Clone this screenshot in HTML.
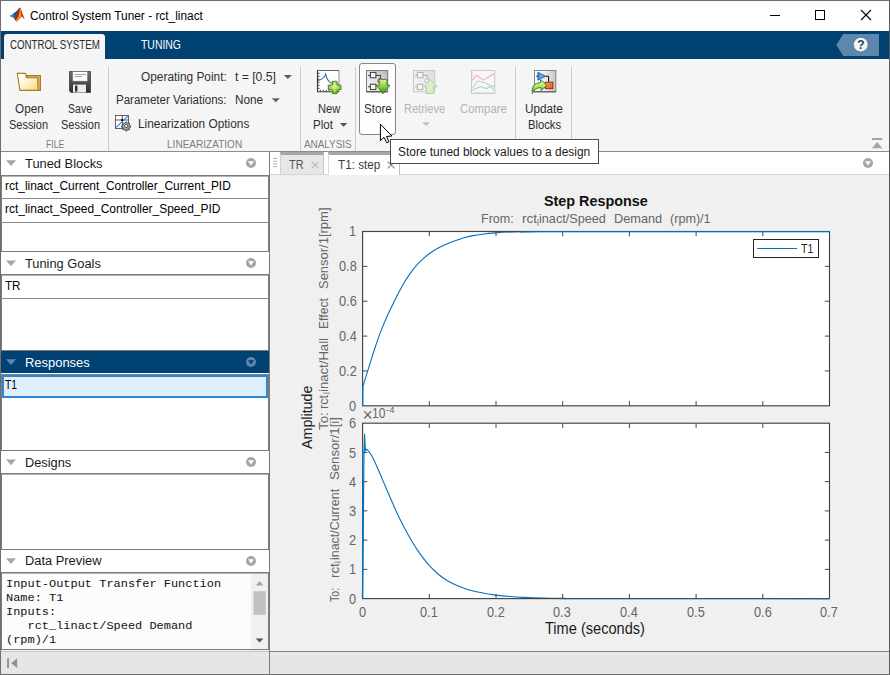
<!DOCTYPE html>
<html lang="en"><head><meta charset="utf-8"><title>Control System Tuner - rct_linact</title>
<style>
html,body{margin:0;padding:0;background:#f0f0f0;}
body{width:890px;height:675px;overflow:hidden;position:relative;font-family:"Liberation Sans",sans-serif;}
#win{position:absolute;left:0;top:0;width:890px;height:675px;overflow:hidden;background:#f0f0f0;}
#win div,#win svg,#win span.t{position:absolute;}
span.t{white-space:pre;line-height:1;transform-origin:0 0;font-family:"Liberation Sans",sans-serif;}
.z9{z-index:9;}
#titlebar{left:1px;top:1px;width:888px;height:30px;background:#fff;}
#tabbar{left:1px;top:31px;width:888px;height:28px;background:#004173;}
#acttab{left:3px;top:3px;width:101px;height:25px;background:#f5f5f5;border-radius:3px 3px 0 0;}
#toolstrip{left:1px;top:59px;width:888px;height:92px;background:#f5f5f5;}
.vsep{width:1px;background:#cacaca;top:8px;height:84px;}
#tsborder{left:0;top:151px;width:890px;height:1px;background:#8c8c8c;}
#storebtn{left:358px;top:4px;width:35px;height:70px;border:1px solid #868686;border-radius:3px;background:#fefefe;box-sizing:content-box;}
#tooltip{left:390px;top:139px;width:207px;height:23px;border:1px solid #4c4c4c;background:#fff;z-index:8;}
/* left panel */
#left{left:1px;top:152px;width:268px;height:498px;background:#fff;}
.hdr{left:0;width:268px;height:22px;background:#fff;}
.hdr.sel{background:#004173;}
.list{left:0;width:268px;border:1px solid #7c7c7c;background:#fff;box-sizing:border-box;box-shadow:inset 0 1px 0 #b4b4b4;}
.rowsep{left:0;width:268px;height:1px;background:#8a8a8a;}
#lborder{left:269px;top:152px;width:1px;height:522px;background:#7a7a7a;z-index:3;}
#wl{left:0;top:0;width:1px;height:675px;background:#6e6e6e;}
#wr{left:889px;top:0;width:1px;height:675px;background:#5a5a5a;}
#wt{left:0;top:0;width:890px;height:1px;background:#6e6e6e;}
#wb{left:0;top:674px;width:890px;height:1px;background:#707070;}
#status{left:1px;top:651px;width:888px;height:23px;background:#e6e6e6;border-top:1px solid #c6c6c6;box-sizing:border-box;}
#status2{left:270px;top:651px;width:619px;height:1px;background:#828282;}
/* right */
#doctabs{left:270px;top:152px;width:619px;height:22px;background:#fff;border-bottom:1px solid #d4d4d4;}
#tabTR{left:10px;top:0;width:44px;height:22px;background:#e7e7e7;border-top:3px solid #a6a6a6;border-left:1px solid #d2d2d2;border-right:1px solid #c2c2c2;box-sizing:border-box;}
#tabT1{left:58px;top:0;width:72px;height:23px;background:#fff;border-top:3px solid #a6a6a6;border-left:1px solid #dadada;border-right:1px solid #c0c0c0;box-sizing:border-box;}
#plot{left:270px;top:175px;width:619px;height:476px;background:#f0f0f0;}

</style></head>
<body>
<div id="win">
<div id="titlebar"></div>
<div id="tabbar"><div id="acttab"></div></div>
<div id="toolstrip">
 <div class="vsep" style="left:107px"></div>
 <div class="vsep" style="left:299px"></div>
 <div class="vsep" style="left:354px"></div>
 <div class="vsep" style="left:514px"></div>
 <div class="vsep" style="left:570px"></div>
 <div id="storebtn"></div>
</div>
<div id="tsborder"></div>
<div id="left">
 <div class="hdr" style="top:0"></div>
 <div class="list" style="top:23px;height:77px"></div>
 <div class="rowsep" style="top:46px"></div>
 <div class="rowsep" style="top:70px"></div>
 <div class="hdr" style="top:100px"></div>
 <div class="list" style="top:122px;height:77px"></div>
 <div class="rowsep" style="top:146px"></div>
 <div class="hdr sel" style="top:199px"></div>
 <div class="list" style="top:222px;height:77px"></div>
 <div id="selrow" style="left:1px;top:223px;width:266px;height:23px;box-sizing:border-box;border:2px solid #2f86d6;background:#ddeffc"></div>
 <div class="hdr" style="top:299px"></div>
 <div class="list" style="top:321px;height:77px"></div>
 <div class="hdr" style="top:398px"></div>
 <div class="list" style="top:420px;height:78px;background:#fcfcfc"></div>
</div>
<div id="lborder"></div>
<div id="doctabs"><div id="tabTR"></div><div id="tabT1"></div></div>
<div id="plot"></div>
<div id="status"></div><div id="status2"></div>
<div id="tooltip"></div>
<svg id="plotsvg" width="890" height="675" viewBox="0 0 890 675" style="left:0;top:0">
<rect x="362.6" y="231.5" width="466.9" height="174.3" fill="#fff" stroke="none"/>
<rect x="362.6" y="423.2" width="466.9" height="175.40000000000003" fill="#fff" stroke="none"/>
<path fill="none" stroke="#0072bd" stroke-width="1.1" stroke-linejoin="round" d="M362.6,405.8L362.80,386.89C363.48,384.67 365.47,378.15 366.89,373.56C368.31,368.96 369.85,364.01 371.33,359.33C372.81,354.65 374.30,349.88 375.78,345.47C377.26,341.05 378.46,337.42 380.22,332.84C381.98,328.27 384.43,322.36 386.33,318.00C388.24,313.64 389.67,310.78 391.67,306.67C393.67,302.56 396.11,297.56 398.33,293.33C400.56,289.11 402.78,285.00 405.00,281.33C407.22,277.67 409.44,274.33 411.67,271.33C413.89,268.33 416.11,265.71 418.33,263.33C420.56,260.96 422.78,258.96 425.00,257.07C427.22,255.18 429.44,253.51 431.67,252.00C433.89,250.49 436.11,249.22 438.33,248.00C440.56,246.78 442.78,245.67 445.00,244.67C447.22,243.67 449.44,242.82 451.67,242.00C453.89,241.18 456.28,240.44 458.33,239.73C460.39,239.03 461.55,238.46 463.99,237.78C466.43,237.09 469.98,236.22 472.98,235.62C475.97,235.02 478.22,234.64 481.97,234.18C485.71,233.72 490.36,233.20 495.45,232.83C500.54,232.46 505.49,232.18 512.53,231.97C519.57,231.76 529.78,231.64 537.70,231.57C545.61,231.50 549.62,231.56 560.00,231.55C570.38,231.54 555.08,231.51 600.00,231.50C644.92,231.49 791.25,231.50 829.50,231.50"/>
<path fill="none" stroke="#0072bd" stroke-width="1.1" stroke-linejoin="round" d="M362.32,598.46 L362.88,572.57 L363.44,507.85 L364.00,457.21 L364.57,434.13 L364.99,443.14 L365.41,451.02 L366.11,449.33 L366.82,449.33C367.19,449.75 368.22,450.73 369.07,451.86C369.91,452.99 370.48,453.41 371.88,456.08C373.29,458.75 375.63,463.72 377.51,467.90C379.39,472.07 381.03,476.20 383.14,481.12C385.25,486.05 387.83,492.05 390.17,497.44C392.52,502.84 394.86,508.46 397.21,513.48C399.55,518.50 401.90,523.09 404.24,527.55C406.59,532.00 408.70,535.90 411.27,540.21C413.85,544.53 416.81,549.31 419.72,553.44C422.62,557.56 425.67,561.55 428.72,564.97C431.77,568.40 434.82,571.30 438.01,573.98C441.19,576.65 444.57,579.04 447.85,581.01C451.14,582.98 454.42,584.39 457.70,585.79C460.98,587.20 463.56,588.28 467.55,589.45C471.54,590.62 476.93,591.89 481.62,592.83C486.31,593.77 491.00,594.47 495.69,595.08C500.38,595.69 505.07,596.11 509.76,596.49C514.44,596.86 518.20,597.07 523.82,597.33C529.45,597.59 536.95,597.87 543.52,598.03C550.09,598.20 554.63,598.24 563.22,598.31C571.80,598.38 550.63,598.41 595.01,598.46C639.39,598.50 790.42,598.58 829.50,598.60"/>
<rect x="362.6" y="231.5" width="466.9" height="174.3" fill="none" stroke="#444444" stroke-width="1.15"/>
<path d="M429.30,405.8v-4.7M429.30,231.5v4.7M496.00,405.8v-4.7M496.00,231.5v4.7M562.70,405.8v-4.7M562.70,231.5v4.7M629.40,405.8v-4.7M629.40,231.5v4.7M696.10,405.8v-4.7M696.10,231.5v4.7M762.80,405.8v-4.7M762.80,231.5v4.7M362.6,266.36h4.7M829.5,266.36h-4.7M362.6,301.22h4.7M829.5,301.22h-4.7M362.6,336.08h4.7M829.5,336.08h-4.7M362.6,370.94h4.7M829.5,370.94h-4.7" stroke="#444444" stroke-width="1" fill="none"/>
<rect x="362.6" y="423.2" width="466.9" height="175.40000000000003" fill="none" stroke="#444444" stroke-width="1.15"/>
<path d="M429.30,598.6v-4.7M429.30,423.2v4.7M496.00,598.6v-4.7M496.00,423.2v4.7M562.70,598.6v-4.7M562.70,423.2v4.7M629.40,598.6v-4.7M629.40,423.2v4.7M696.10,598.6v-4.7M696.10,423.2v4.7M762.80,598.6v-4.7M762.80,423.2v4.7M362.6,452.43h4.7M829.5,452.43h-4.7M362.6,481.67h4.7M829.5,481.67h-4.7M362.6,510.90h4.7M829.5,510.90h-4.7M362.6,540.13h4.7M829.5,540.13h-4.7M362.6,569.37h4.7M829.5,569.37h-4.7" stroke="#444444" stroke-width="1" fill="none"/>
<path d="M362.6,405.8V387.5" stroke="#0072bd" stroke-width="1.2"/>
<path d="M520,232.0L545,231.6H829.5" stroke="#0072bd" stroke-width="1.1" fill="none"/>
<path d="M362.6,598.6V448.6" stroke="#0072bd" stroke-width="1.2"/>
<path d="M560,598.8000000000001H829.5" stroke="#0072bd" stroke-width="1.0" fill="none" opacity=".55"/>
<rect x="753.5" y="239.5" width="65" height="18" fill="#fff" stroke="#262626" stroke-width="1"/>
<path d="M757.1,248.5H797.1" stroke="#0072bd" stroke-width="1.1"/>
</svg>
<svg id="uisvg" width="890" height="675" viewBox="0 0 890 675" style="left:0;top:0">
<defs>
 <linearGradient id="gFold" x1="0" y1="0" x2="1" y2="1"><stop offset="0" stop-color="#ffffff"/><stop offset=".4" stop-color="#fef8de"/><stop offset="1" stop-color="#f3d774"/></linearGradient>
 <linearGradient id="gFlop" x1="0" y1="0" x2="0" y2="1"><stop offset="0" stop-color="#707070"/><stop offset="1" stop-color="#2e2e2e"/></linearGradient>
 <linearGradient id="gBox" x1="0" y1="1" x2="1" y2="0"><stop offset="0" stop-color="#f4f4f4"/><stop offset=".5" stop-color="#e4e4e4"/><stop offset="1" stop-color="#b4b4b4"/></linearGradient>
 <linearGradient id="gBoxU" x1="0" y1="0" x2="1" y2="0"><stop offset="0" stop-color="#ffffff"/><stop offset=".5" stop-color="#eeeeee"/><stop offset="1" stop-color="#c4c4c4"/></linearGradient>
 <linearGradient id="gGreen" x1="0" y1="0" x2="0" y2="1"><stop offset="0" stop-color="#d9f2a6"/><stop offset=".45" stop-color="#9ed14b"/><stop offset="1" stop-color="#2f8a12"/></linearGradient>
 <radialGradient id="gPlus" cx=".5" cy=".4" r=".6"><stop offset="0" stop-color="#e4f7b8"/><stop offset=".6" stop-color="#a5d64e"/><stop offset="1" stop-color="#62a81c"/></radialGradient>
 <linearGradient id="gArr" x1="0" y1="0" x2="0" y2="1"><stop offset="0" stop-color="#e6f8c0"/><stop offset=".5" stop-color="#b4e066"/><stop offset="1" stop-color="#4d9c18"/></linearGradient>
 <linearGradient id="gTri" x1="0" y1="0" x2="1" y2="0"><stop offset="0" stop-color="#2277c8"/><stop offset=".4" stop-color="#6db6ee"/><stop offset="1" stop-color="#1c6fc0"/></linearGradient>
 <linearGradient id="gOr" x1="0" y1="0" x2="1" y2="1"><stop offset="0" stop-color="#f6a05a"/><stop offset="1" stop-color="#dd5a1c"/></linearGradient>
 <radialGradient id="gHelp" cx=".4" cy=".35" r=".75"><stop offset="0" stop-color="#ffffff"/><stop offset=".7" stop-color="#eef2f6"/><stop offset="1" stop-color="#b9c7d6"/></radialGradient>
 <radialGradient id="gGear" cx=".4" cy=".35" r=".8"><stop offset="0" stop-color="#cfcfcf"/><stop offset="1" stop-color="#7a7a7a"/></radialGradient>
</defs>
<!-- matlab logo -->
<g>
 <path d="M9.3,15.9 C11.5,15 13,14 14.4,12.9 C16,11.8 17.6,10.6 19,8.3 L17.2,13.5 L14.4,18.4 L12.2,17.3 Z" fill="#2a86d6"/>
 <path d="M13.4,13.6 C15.2,12.5 17.3,10.8 19,8.3 L17.4,13 L15.2,16.8 L14.2,17.6 Z" fill="#0c4a90" opacity=".8"/>
 <path d="M14.1,18.3 L16.3,14.5 L18,10.6 L19.3,7.8 L20.4,7.8 L21.7,11 L23,15 L24.8,19.5 L23.4,18.3 L21.8,16.6 L20.3,18 L18.3,20.3 L16.4,21.9 Z" fill="#c2351a"/>
 <path d="M19.7,8.4 L20.5,9 L21,13 L20.8,16.8 L18.4,20.1 L16.4,21.9 L15.6,20.8 L18.2,17.2 L19.4,13 Z" fill="#f0a236"/>
 <path d="M16.3,14.5 L18,10.6 L19.3,7.8 L19.6,12 L17.8,17 L15.6,20.6 L14.1,18.3 Z" fill="#8e1d12" opacity=".5"/>
</g>
<!-- window controls -->
<path d="M770,15.5H780" stroke="#000" stroke-width="1"/>
<rect x="815.5" y="10.5" width="9" height="9" fill="none" stroke="#000" stroke-width="1"/>
<path d="M861,10L871,20M871,10L861,20" stroke="#000" stroke-width="1.1" fill="none"/>
<!-- help -->
<path d="M836.2,45L843.3,34H879V56H843.3Z" fill="#5f87ae"/>
<circle cx="860.8" cy="44.7" r="7.3" fill="url(#gHelp)" stroke="#4a6f95" stroke-width=".6"/>
<text x="860.9" y="49.3" text-anchor="middle" font-family="Liberation Sans, sans-serif" font-weight="bold" font-size="12.5" fill="#1d3f66">?</text>
<!-- folder -->
<path d="M26.3,75.6H40.4V90.4H37.5Z" fill="#e2b95a" stroke="#a97622" stroke-width="1.1"/>
<path d="M17.3,73.4H25.6L26.5,77.7H37.5L38.3,90.4H19.9Z" fill="url(#gFold)" stroke="#ad7a26" stroke-width="1.1" stroke-linejoin="round"/>
<!-- floppy -->
<path d="M69.5,71.5H90.5V92.5H71L69.5,91Z" fill="url(#gFlop)" stroke="#3c3c3c" stroke-width=".8"/>
<rect x="72.6" y="71.6" width="15" height="9.6" fill="#fdfdfd" stroke="#6a6a6a" stroke-width=".6"/>
<path d="M74.5,74.5H86M74.5,76.6H82" stroke="#9a9a9a" stroke-width=".9"/>
<rect x="73" y="84.6" width="13" height="7.9" fill="#ededed"/>
<rect x="75" y="85.6" width="2.4" height="6" fill="#303030"/>
<!-- linearization icon -->
<rect x="115.5" y="115.5" width="13" height="13" fill="#fff" stroke="#484848" stroke-width=".85"/>
<path d="M122.3,115.5V128.5M115.5,120H128.5" stroke="#4a4a4a" stroke-width=".9"/>
<path d="M115.8,127.6L128.2,115.9" stroke="#2a7fd0" stroke-width="1.05"/>
<circle cx="122" cy="120" r="1.1" fill="#000"/>
<g transform="translate(126.2,126) scale(.87)">
 <path d="M-0.8,-4.5h1.6l.3,1.1 .9,.4 1,-.6 1.15,1.15 -.6,1 .4,.9 1.1,.3v1.6l-1.1,.3 -.4,.9 .6,1 -1.15,1.15 -1,-.6 -.9,.4 -.3,1.1h-1.6l-.3,-1.1 -.9,-.4 -1,.6 -1.15,-1.15 .6,-1 -.4,-.9 -1.1,-.3v-1.6l1.1,-.3 .4,-.9 -.6,-1 1.15,-1.15 1,.6 .9,-.4z" fill="url(#gGear)" stroke="#2e2e2e" stroke-width=".9"/>
 <circle r="1.9" fill="#f8f8f8" stroke="#2e2e2e" stroke-width=".9"/>
</g>
<!-- dropdown arrows -->
<path d="M283.7,75H292L287.85,79Z" fill="#606060"/>
<path d="M271.7,98.2H279.9L275.8,102.2Z" fill="#606060"/>
<path d="M339.8,122.9H347.4L343.6,126.8Z" fill="#555"/>
<path d="M422.2,122.3H430L426.1,126.1Z" fill="#c0c0c0"/>
<!-- new plot icon -->
<rect x="317.5" y="70.5" width="21.5" height="21.3" fill="#fff"/>
<path d="M339,70.5V91.8" stroke="#8c8c8c" stroke-width="1" fill="none"/>
<path d="M317.5,70.5H339" stroke="#666" stroke-width="1" fill="none"/>
<path d="M317.5,70.2V91.8H339" stroke="#333" stroke-width="1.1" fill="none"/>
<path d="M318,73.3h1.6M318,76.3h1.6M318,79.3h1.6M318,82.3h1.6M318,85.3h1.6M318,88.3h1.6M320.3,91.2v-1.4M323.3,91.2v-1.4M326.2,91.2v-1.4M329.1,91.2v-1.4" stroke="#333" stroke-width=".9"/>
<path d="M318,80.6C321.5,79.8 324.3,78.2 325.7,74.2C326.6,78.8 329,82.6 332.5,83.6C334.5,84.1 336.5,84 338.3,84" stroke="#34699a" stroke-width="1.05" fill="none"/>
<path d="M332.4,81.3h4.6v3.8h3.9v4.6h-3.9v3.9h-4.6v-3.9h-4.1v-4.6h4.1z" fill="url(#gPlus)" stroke="#3d7f14" stroke-width=".9" stroke-linejoin="miter"/>
<!-- store icon -->
<rect x="366.5" y="70.5" width="21.2" height="21.3" fill="url(#gBox)" stroke="#7a7a7a" stroke-width="1"/>
<path d="M366.5,91.8H387.7" stroke="#444" stroke-width="1"/>
<path d="M368,75.4h2.2M368,86.8h2.2M376,75.4h4.6v3" stroke="#3c3c3c" stroke-width="1" fill="none"/>
<circle cx="380" cy="80.8" r="2.2" fill="#e8e8e8" stroke="#3c3c3c" stroke-width=".9"/>
<rect x="370.4" y="72.4" width="5.5" height="5.4" fill="#f4f4f4" stroke="#3c3c3c" stroke-width="1"/>
<rect x="370.4" y="84.2" width="5.5" height="5.4" fill="#f4f4f4" stroke="#3c3c3c" stroke-width="1"/>
<path d="M379.2,79.3H387V85.3H389.9L383,93.7L376.3,85.3H379.2Z" fill="url(#gGreen)" stroke="#2c7a10" stroke-width=".9" stroke-linejoin="round"/>
<!-- retrieve icon (disabled) -->
<g opacity=".42">
<rect x="413.5" y="70.5" width="21.2" height="21.3" fill="url(#gBox)" stroke="#8a8a8a" stroke-width="1"/>
<path d="M415,75.4h2.2M415,86.8h2.2M423,75.4h4.6v3" stroke="#555" stroke-width="1" fill="none"/>
<circle cx="427" cy="80.8" r="2.2" fill="#e8e8e8" stroke="#555" stroke-width=".9"/>
<rect x="417.4" y="72.4" width="5.5" height="5.4" fill="#f4f4f4" stroke="#555" stroke-width="1"/>
<rect x="417.4" y="84.2" width="5.5" height="5.4" fill="#f4f4f4" stroke="#555" stroke-width="1"/>
<path d="M430.4,79.3L437,86.8H433.8V93.5H426.2V86.8H424Z" fill="#b9e68c" stroke="#3f9a2a" stroke-width=".9" stroke-linejoin="round"/>
</g>
<!-- compare icon (disabled) -->
<g opacity=".42">
<rect x="471.5" y="70.5" width="23.3" height="23" fill="#fbfbfb" stroke="#8e8e8e" stroke-width="1"/>
<path d="M472.3,80.4L476.3,75.2L483.5,80.2L494,73.8" stroke="#e8523a" stroke-width="1.1" fill="none"/>
<path d="M472.3,88L477.5,81L486,83L491.5,86.5L494.3,91.5" stroke="#5cb85c" stroke-width="1.1" fill="none"/>
<path d="M472.3,90.2L480.5,86.5L486,88.6L494,85.4" stroke="#4a9ad8" stroke-width="1.1" fill="none"/>
<path d="M474,93v-1.3M476.5,93v-1.3M479,93v-1.3M481.5,93v-1.3M484,93v-1.3M486.5,93v-1.3M489,93v-1.3M491.5,93v-1.3M472,73h1.2M472,76h1.2M472,79h1.2" stroke="#777" stroke-width=".8"/>
</g>
<!-- update blocks icon -->
<rect x="534.5" y="70.5" width="21.3" height="21.3" fill="url(#gBoxU)" stroke="#858585" stroke-width="1"/>
<path d="M534.5,91.8H555.8" stroke="#505050" stroke-width="1"/>
<path d="M536.2,76.2H538M546,76.2H548.6V82" stroke="#111" stroke-width="1" fill="none"/>
<path d="M537.9,72.2L545.9,76.2L537.9,80.2Z" fill="url(#gTri)" stroke="#1c64a8" stroke-width=".8" stroke-linejoin="round"/>
<rect x="545.3" y="82.2" width="7.6" height="6.5" fill="url(#gOr)" stroke="#8c2210" stroke-width=".9"/>
<path d="M532.4,93.6C531.3,87 534.2,82.9 540.6,82.6L540.6,79.6L546.9,85.2L541,90.6L541,87.7C536.6,87.5 534.2,89.6 532.4,93.6Z" fill="url(#gArr)" stroke="#2f7a12" stroke-width=".9" stroke-linejoin="round"/>
<!-- collapse toolstrip -->
<path d="M872,138h10.2v2H872zM877.1,142L882.3,148.2H871.9Z" fill="#a4a4a4"/>
<!-- header triangles + circles -->
<g fill="#a6a6a6">
 <path d="M6,160.2H16L11,166Z"/><path d="M6,260.4H16L11,266.2Z"/><path d="M6,459.4H16L11,465.2Z"/><path d="M6,558.2H16L11,564Z"/>
 <circle cx="251" cy="163" r="5"/><circle cx="251" cy="263" r="5"/><circle cx="251" cy="462" r="5"/><circle cx="251" cy="561" r="5"/>
 <circle cx="868" cy="163" r="5"/>
</g>
<g fill="#fff">
 <path d="M248,161.3H254L251,165.6Z"/><path d="M248,261.3H254L251,265.6Z"/><path d="M248,460.3H254L251,464.6Z"/><path d="M248,559.3H254L251,563.6Z"/>
 <path d="M865,161.3H871L868,165.6Z"/>
</g>
<path d="M6,359.2H16L11,365Z" fill="#5f87ae"/>
<circle cx="251" cy="362" r="5" fill="#5f87ae"/>
<path d="M248,360.3H254L251,364.6Z" fill="#004173"/>
<!-- doc tabs : gripper + close -->
<path d="M273,158.5h4.3M273,161.2h4.3M273,163.9h4.3M273,166.6h4.3" stroke="#b4b4b4" stroke-width="1"/>
<path d="M311.7,161.6L318.5,168.4M318.5,161.6L311.7,168.4" stroke="#b8b8b8" stroke-width="1.3" fill="none"/>
<path d="M387.7,161.6L394.5,168.4M394.5,161.6L387.7,168.4" stroke="#8e8e8e" stroke-width="1.3" fill="none"/>
<!-- scrollbar -->
<rect x="251" y="574" width="17" height="75" fill="#f0f0f0"/>
<rect x="253.5" y="591.2" width="12.2" height="23.6" fill="#c1c1c1"/>
<path d="M255.8,585.4L259.6,581L263.4,585.4Z" fill="#a3a3a3"/>
<path d="M255.8,638.4L259.6,642.4L263.4,638.4Z" fill="#505050"/>
<!-- status icon -->
<path d="M7.1,658.3h1.9v9.8h-1.9zM17.2,658.3V668.1L11.1,663.2Z" fill="#929292"/>
</svg>
<svg id="cursor" width="20" height="26" viewBox="376 120 20 26" style="left:376px;top:120px;z-index:10">
<path d="M380.4,124.1V140.7L384,137.3L386.9,142.9L389,141.8L386.5,136.5L391.8,136Z" fill="#fff" stroke="#000" stroke-width="1" stroke-linejoin="miter"/>
</svg>

<span class="t " style="left:30.40px;top:10.00px;font-size:12px;color:#000;transform:scaleX(0.9895);">Control System Tuner - rct_linact</span>
<span class="t " style="left:9.50px;top:39.10px;font-size:12px;color:#2b2b2b;transform:scaleX(0.8097);">CONTROL SYSTEM</span>
<span class="t " style="left:140.90px;top:39.10px;font-size:12px;color:#fff;transform:scaleX(0.8674);">TUNING</span>
<span class="t " style="left:14.50px;top:102.50px;font-size:12px;color:#2e2e2e;transform:scaleX(0.9809);">Open</span>
<span class="t " style="left:9.20px;top:119.20px;font-size:12px;color:#2e2e2e;transform:scaleX(0.9133);">Session</span>
<span class="t " style="left:68.20px;top:102.50px;font-size:12px;color:#2e2e2e;transform:scaleX(0.8772);">Save</span>
<span class="t " style="left:60.80px;top:119.20px;font-size:12px;color:#2e2e2e;transform:scaleX(0.9133);">Session</span>
<span class="t " style="left:45.70px;top:138.70px;font-size:10.5px;color:#7d7d7d;transform:scaleX(0.8248);">FILE</span>
<span class="t " style="left:140.50px;top:70.90px;font-size:12px;color:#2e2e2e;transform:scaleX(0.9894);">Operating Point:</span>
<span class="t " style="left:234.90px;top:70.90px;font-size:12px;color:#2e2e2e;transform:scaleX(1.0134);">t = [0.5]</span>
<span class="t " style="left:115.80px;top:93.80px;font-size:12px;color:#2e2e2e;transform:scaleX(0.9594);">Parameter Variations:</span>
<span class="t " style="left:235.30px;top:93.80px;font-size:12px;color:#2e2e2e;transform:scaleX(0.9795);">None</span>
<span class="t " style="left:138.00px;top:118.00px;font-size:12px;color:#2e2e2e;transform:scaleX(0.9873);">Linearization Options</span>
<span class="t " style="left:166.80px;top:138.60px;font-size:10.5px;color:#7d7d7d;transform:scaleX(0.9570);">LINEARIZATION</span>
<span class="t " style="left:317.50px;top:102.50px;font-size:12px;color:#2e2e2e;transform:scaleX(0.9286);">New</span>
<span class="t " style="left:312.80px;top:119.20px;font-size:12px;color:#2e2e2e;transform:scaleX(0.9619);">Plot</span>
<span class="t " style="left:304.00px;top:138.60px;font-size:10.5px;color:#7d7d7d;transform:scaleX(0.9411);">ANALYSIS</span>
<span class="t " style="left:364.00px;top:102.80px;font-size:12px;color:#2e2e2e;transform:scaleX(0.9656);">Store</span>
<span class="t " style="left:404.40px;top:102.50px;font-size:12px;color:#b3b3b3;transform:scaleX(0.9197);">Retrieve</span>
<span class="t " style="left:459.70px;top:102.50px;font-size:12px;color:#b3b3b3;transform:scaleX(0.9502);">Compare</span>
<span class="t " style="left:525.00px;top:102.50px;font-size:12px;color:#2e2e2e;transform:scaleX(0.9767);">Update</span>
<span class="t " style="left:527.80px;top:119.20px;font-size:12px;color:#2e2e2e;transform:scaleX(0.9337);">Blocks</span>
<span class="t z9" style="left:397.70px;top:146.00px;font-size:12px;color:#1a1a1a;transform:scaleX(0.9934);">Store tuned block values to a design</span>
<span class="t " style="left:25.30px;top:156.50px;font-size:13.7px;color:#1a1a1a;transform:scaleX(0.9403);">Tuned Blocks</span>
<span class="t " style="left:5.40px;top:180.00px;font-size:12.6px;color:#000;transform:scaleX(0.9488);">rct_linact_Current_Controller_Current_PID</span>
<span class="t " style="left:5.40px;top:203.10px;font-size:12.6px;color:#000;transform:scaleX(0.9496);">rct_linact_Speed_Controller_Speed_PID</span>
<span class="t " style="left:25.30px;top:257.00px;font-size:13.7px;color:#1a1a1a;transform:scaleX(0.9369);">Tuning Goals</span>
<span class="t " style="left:5.40px;top:279.70px;font-size:12.6px;color:#000;transform:scaleX(0.9228);">TR</span>
<span class="t " style="left:25.30px;top:355.80px;font-size:13.7px;color:#fff;transform:scaleX(0.9447);">Responses</span>
<span class="t " style="left:5.40px;top:379.00px;font-size:12.6px;color:#000;transform:scaleX(0.8230);">T1</span>
<span class="t " style="left:25.30px;top:456.00px;font-size:13.7px;color:#1a1a1a;transform:scaleX(0.9342);">Designs</span>
<span class="t " style="left:25.30px;top:554.40px;font-size:13.7px;color:#1a1a1a;transform:scaleX(0.9397);">Data Preview</span>
<span class="t " style="left:6.00px;top:578.70px;font-size:10.6px;color:#111;font-family:'Liberation Mono', monospace;transform:scaleX(1.1278);">Input-Output Transfer Function</span>
<span class="t " style="left:6.00px;top:592.80px;font-size:10.6px;color:#111;font-family:'Liberation Mono', monospace;transform:scaleX(1.1278);">Name: T1</span>
<span class="t " style="left:6.00px;top:606.90px;font-size:10.6px;color:#111;font-family:'Liberation Mono', monospace;transform:scaleX(1.1275);">Inputs:</span>
<span class="t " style="left:6.00px;top:621.00px;font-size:10.6px;color:#111;font-family:'Liberation Mono', monospace;transform:scaleX(1.1278);">   rct_linact/Speed Demand</span>
<span class="t " style="left:6.00px;top:635.10px;font-size:10.6px;color:#111;font-family:'Liberation Mono', monospace;transform:scaleX(1.1275);">(rpm)/1</span>
<span class="t " style="left:288.70px;top:157.70px;font-size:13.6px;color:#555;transform:scaleX(0.8055);">TR</span>
<span class="t " style="left:338.00px;top:157.70px;font-size:13.6px;color:#3c3c3c;transform:scaleX(0.8631);">T1: step</span>
<span class="t " style="left:543.60px;top:193.00px;font-size:15.4px;color:#111;font-weight:bold;transform:scaleX(0.9327);">Step Response</span>
<span class="t " style="left:480.80px;top:212.00px;font-size:13.33px;color:#666666;transform:scaleX(0.9393);">From:</span>
<span class="t " style="left:521.70px;top:212.00px;font-size:13.33px;color:#666666;transform:scaleX(1.0059);">rct</span>
<span class="t " style="left:537.00px;top:218.50px;font-size:9px;color:#666666;transform:scaleX(0.9000);">l</span>
<span class="t " style="left:538.90px;top:212.00px;font-size:13.33px;color:#666666;transform:scaleX(0.9502);">inact/Speed</span>
<span class="t " style="left:614.00px;top:212.00px;font-size:13.33px;color:#666666;transform:scaleX(0.9565);">Demand</span>
<span class="t " style="left:670.40px;top:212.00px;font-size:13.33px;color:#666666;transform:scaleX(0.9452);">(rpm)/1</span>
<span class="t " style="left:545.40px;top:621.00px;font-size:15.6px;color:#1c1c1c;transform:scaleX(0.9347);">Time (seconds)</span>
<span class="t " style="left:800.70px;top:242.50px;font-size:12px;color:#262626;transform:scaleX(0.8776);">T1</span>
<span class="t " style="left:362.40px;top:406.90px;font-size:17.5px;color:#666666;">&times;</span>
<span class="t " style="left:371.90px;top:405.70px;font-size:14.2px;color:#666666;transform:scaleX(0.8491);">10</span>
<span class="t " style="left:385.80px;top:404.70px;font-size:9.6px;color:#666666;transform:scaleX(0.9846);">-4</span>
<span class="t " style="left:299.00px;top:448.70px;font-size:15.0px;color:#1c1c1c;transform:rotate(-90deg) scaleX(0.9505);">Amplitude</span>
<span class="t " style="left:316.50px;top:430.40px;font-size:13.33px;color:#666666;transform:rotate(-90deg) scaleX(1.0011);">To:</span>
<span class="t " style="left:316.50px;top:408.60px;font-size:13.33px;color:#666666;transform:rotate(-90deg) scaleX(0.9519);">rct</span>
<span class="t " style="left:323.00px;top:394.00px;font-size:9px;color:#666666;transform:rotate(-90deg) scaleX(0.9000);">l</span>
<span class="t " style="left:316.50px;top:391.50px;font-size:13.33px;color:#666666;transform:rotate(-90deg) scaleX(0.9849);">inact/Hall</span>
<span class="t " style="left:316.50px;top:328.70px;font-size:13.33px;color:#666666;transform:rotate(-90deg) scaleX(0.9130);">Effect</span>
<span class="t " style="left:316.50px;top:288.70px;font-size:13.33px;color:#666666;transform:rotate(-90deg) scaleX(0.9735);">Sensor/1[rpm]</span>
<span class="t " style="left:327.90px;top:601.70px;font-size:13.33px;color:#666666;transform:rotate(-90deg) scaleX(0.7930);">To:</span>
<span class="t " style="left:327.90px;top:577.90px;font-size:13.33px;color:#666666;transform:rotate(-90deg) scaleX(0.9924);">rct</span>
<span class="t " style="left:334.40px;top:562.80px;font-size:9px;color:#666666;transform:rotate(-90deg) scaleX(0.9000);">l</span>
<span class="t " style="left:327.90px;top:560.30px;font-size:13.33px;color:#666666;transform:rotate(-90deg) scaleX(0.9317);">inact/Current</span>
<span class="t " style="left:327.90px;top:480.10px;font-size:13.33px;color:#666666;transform:rotate(-90deg) scaleX(0.9872);">Sensor/1[i]</span>
<span class="t " style="left:349.20px;top:224.30px;font-size:14.2px;color:#666666;transform:scaleX(0.9000);">1</span>
<span class="t " style="left:338.54px;top:259.20px;font-size:14.2px;color:#666666;transform:scaleX(0.9000);">0.8</span>
<span class="t " style="left:338.54px;top:294.10px;font-size:14.2px;color:#666666;transform:scaleX(0.9000);">0.6</span>
<span class="t " style="left:338.54px;top:329.00px;font-size:14.2px;color:#666666;transform:scaleX(0.9000);">0.4</span>
<span class="t " style="left:338.54px;top:363.90px;font-size:14.2px;color:#666666;transform:scaleX(0.9000);">0.2</span>
<span class="t " style="left:349.20px;top:398.80px;font-size:14.2px;color:#666666;transform:scaleX(0.9000);">0</span>
<span class="t " style="left:349.20px;top:416.30px;font-size:14.2px;color:#666666;transform:scaleX(0.9000);">6</span>
<span class="t " style="left:349.20px;top:445.50px;font-size:14.2px;color:#666666;transform:scaleX(0.9000);">5</span>
<span class="t " style="left:349.20px;top:474.70px;font-size:14.2px;color:#666666;transform:scaleX(0.9000);">4</span>
<span class="t " style="left:349.20px;top:503.90px;font-size:14.2px;color:#666666;transform:scaleX(0.9000);">3</span>
<span class="t " style="left:349.20px;top:533.10px;font-size:14.2px;color:#666666;transform:scaleX(0.9000);">2</span>
<span class="t " style="left:349.20px;top:562.30px;font-size:14.2px;color:#666666;transform:scaleX(0.9000);">1</span>
<span class="t " style="left:349.20px;top:591.50px;font-size:14.2px;color:#666666;transform:scaleX(0.9000);">0</span>
<span class="t " style="left:358.65px;top:605.10px;font-size:14.2px;color:#666666;transform:scaleX(0.9000);">0</span>
<span class="t " style="left:420.02px;top:605.10px;font-size:14.2px;color:#666666;transform:scaleX(0.9000);">0.1</span>
<span class="t " style="left:486.72px;top:605.10px;font-size:14.2px;color:#666666;transform:scaleX(0.9000);">0.2</span>
<span class="t " style="left:553.42px;top:605.10px;font-size:14.2px;color:#666666;transform:scaleX(0.9000);">0.3</span>
<span class="t " style="left:620.12px;top:605.10px;font-size:14.2px;color:#666666;transform:scaleX(0.9000);">0.4</span>
<span class="t " style="left:686.82px;top:605.10px;font-size:14.2px;color:#666666;transform:scaleX(0.9000);">0.5</span>
<span class="t " style="left:753.52px;top:605.10px;font-size:14.2px;color:#666666;transform:scaleX(0.9000);">0.6</span>
<span class="t " style="left:820.22px;top:605.10px;font-size:14.2px;color:#666666;transform:scaleX(0.9000);">0.7</span>
<div id="wl"></div><div id="wr"></div><div id="wt"></div><div id="wb"></div>
</div>

</body></html>
